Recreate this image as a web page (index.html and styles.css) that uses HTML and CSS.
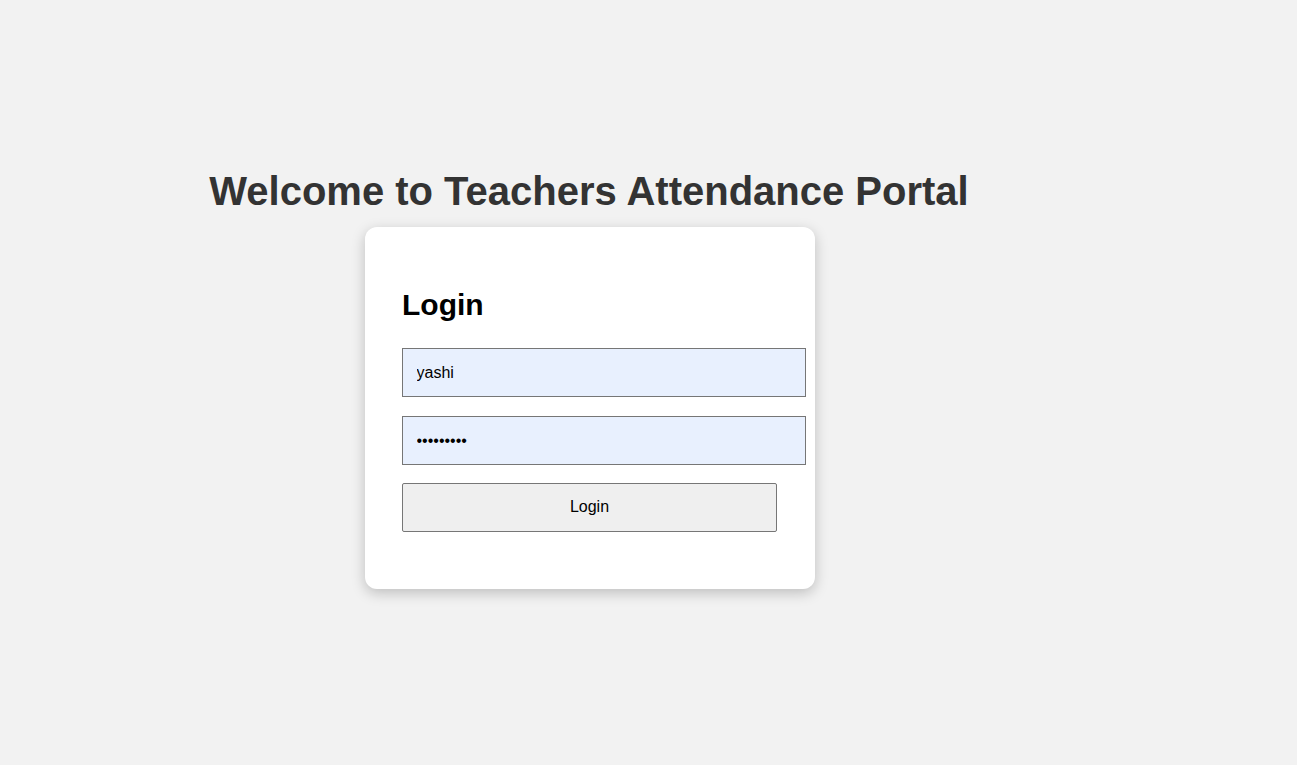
FILE: index.html
```html
<!DOCTYPE html>
<html lang="en">
<head>
<meta charset="utf-8">
<title>Teachers Attendance Portal</title>
<link rel="stylesheet" href="styles.css">
</head>
<body>
<main class="page">
  <h1 class="title">Welcome to Teachers Attendance Portal</h1>
  <div class="card">
    <h2 class="card-title">Login</h2>
    <form class="login-form">
      <input class="field" type="text" value="yashi">
      <input class="field field-pass" type="password" value="yashi1234">
      <button class="btn" type="button">Login</button>
    </form>
  </div>
</main>
</body>
</html>
```

FILE: styles.css
```css
html, body {
  margin: 0;
  padding: 0;
}
body {
  background: #f2f2f2;
  font-family: "Liberation Sans", Arial, sans-serif;
  height: 765px;
  overflow: hidden;
}
.page {
  width: 1178px;
  display: flex;
  flex-direction: column;
  align-items: center;
  padding-top: 168px;
}
.title {
  margin: 0 0 13px;
  font-size: 40px;
  line-height: 46px;
  font-weight: bold;
  color: #333333;
}
.card {
  box-sizing: border-box;
  width: 450px;
  margin-left: 1px;
  background: #ffffff;
  border-radius: 12px;
  padding: 59px 37.5px 57px;
  box-shadow: 0 4px 14px rgba(0, 0, 0, 0.22);
}
.card-title {
  margin: 0 0 25px;
  font-size: 30px;
  line-height: 37px;
  font-weight: bold;
  color: #000000;
}
.login-form {
  display: flex;
  flex-direction: column;
  align-items: flex-start;
  margin: 0;
}
.field {
  box-sizing: content-box;
  width: 100%;
  height: 18px;
  padding: 15px 13.5px 14px;
  margin: 0 0 19px;
  border: 1px solid #767676;
  border-radius: 0;
  background: #e8f0fe;
  font-family: "Liberation Sans", Arial, sans-serif;
  font-size: 16px;
  color: #000000;
  outline: none;
}
.field-pass {
  margin-bottom: 18px;
}
.btn {
  box-sizing: border-box;
  width: 100%;
  height: 48.5px;
  padding: 0;
  border: 1px solid #767676;
  border-radius: 2px;
  background: #efefef;
  font-family: "Liberation Sans", Arial, sans-serif;
  font-size: 16px;
  color: #000000;
}
```
